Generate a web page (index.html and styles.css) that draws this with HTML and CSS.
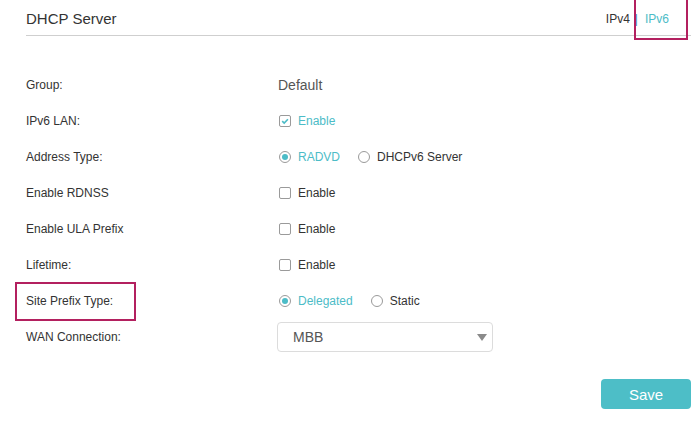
FILE: index.html
```html
<!DOCTYPE html>
<html>
<head>
<meta charset="utf-8">
<link rel="stylesheet" href="styles.css">
</head>
<body>
<div class="page">
  <div class="header">
    <div class="title">DHCP Server</div>
    <div class="tabs">
      <span class="tab">IPv4</span>
      <span class="sep">|</span>
      <span class="tab active mark">IPv6</span>
    </div>
  </div>

  <div class="form">
    <div class="label">Group:</div>
    <div class="value"><span class="plain">Default</span></div>

    <div class="label">IPv6 LAN:</div>
    <div class="value"><span class="opt on"><span class="cb checked"><svg viewBox="0 0 12 12" width="12" height="12"><path d="M3.2 6.2 L5.2 8.1 L8.9 4.2" fill="none" stroke="#4cbcc7" stroke-width="1.6"/></svg></span>Enable</span></div>

    <div class="label">Address Type:</div>
    <div class="value"><span class="opt on"><span class="rd checked"></span>RADVD</span><span class="opt"><span class="rd"></span>DHCPv6 Server</span></div>

    <div class="label">Enable RDNSS</div>
    <div class="value"><span class="opt"><span class="cb"></span>Enable</span></div>

    <div class="label">Enable ULA Prefix</div>
    <div class="value"><span class="opt"><span class="cb"></span>Enable</span></div>

    <div class="label">Lifetime:</div>
    <div class="value"><span class="opt"><span class="cb"></span>Enable</span></div>

    <div class="label"><span class="mark2">Site Prefix Type:</span></div>
    <div class="value"><span class="opt on"><span class="rd checked"></span>Delegated</span><span class="opt"><span class="rd"></span>Static</span></div>

    <div class="label">WAN Connection:</div>
    <div class="value"><div class="select"><span>MBB</span><span class="arrow"></span></div></div>
  </div>

  <div class="actions">
    <button class="save">Save</button>
  </div>
</div>
</body>
</html>
```
FILE: styles.css
```css
* { box-sizing: border-box; }
html, body { margin: 0; padding: 0; background: #fff; }
body { font-family: "Liberation Sans", Arial, sans-serif; color: #333; }

.page { padding: 0 6px 0 26px; width: 697px; }

.header {
  height: 36px;
  border-bottom: 1px solid #cfcfcf;
  display: flex;
  justify-content: space-between;
  align-items: center;
  padding-top: 2px;
}
.title { font-size: 15px; color: #333; }
.tabs { display: flex; align-items: center; font-size: 12px; padding-right: 22px; }
.tab { color: #333; }
.tab.active { color: #4cbcc7; }
.sep { color: #3d8fc6; margin: 0 7px 0 5px; font-size: 12px; }

.mark { position: relative; }
.mark::after {
  content: "";
  position: absolute;
  left: -11px; right: -19px;
  top: -17px; bottom: -14px;
  border: 2px solid #b3205f;
}

.form {
  margin-top: 31px;
  display: grid;
  grid-template-columns: 252px 1fr;
  grid-auto-rows: 36px;
  font-size: 12px;
}
.label { display: flex; align-items: center; color: #333; }
.value { display: flex; align-items: center; }
.plain { font-size: 14px; color: #555; }

.mark2 { position: relative; }
.mark2::after {
  content: "";
  position: absolute;
  left: -11px; right: -23px;
  top: -12px; bottom: -13px;
  border: 2px solid #b3205f;
}

.opt { display: inline-flex; align-items: center; color: #333; margin-right: 17px; }
.opt.on { color: #4cbcc7; }

.cb {
  width: 12px; height: 12px;
  border: 1px solid #9a9a9a;
  border-radius: 2px;
  margin: 0 7px 0 1px;
  display: inline-block;
  position: relative;
}
.cb svg { position: absolute; left: -1px; top: -1px; }

.rd {
  width: 12px; height: 12px;
  border: 1px solid #9a9a9a;
  border-radius: 50%;
  margin: 0 7px 0 1px;
  display: inline-block;
  position: relative;
}
.rd.checked::after {
  content: "";
  position: absolute;
  left: 2px; top: 2px;
  width: 6px; height: 6px;
  border-radius: 50%;
  background: #4cbcc7;
}

.select {
  width: 216px; height: 30px;
  margin-left: -1px;
  border: 1px solid #dcdcdc;
  border-radius: 4px;
  display: flex;
  align-items: center;
  justify-content: space-between;
  padding: 0 5px 0 15px;
  font-size: 14px;
  color: #555;
}
.arrow {
  width: 0; height: 0;
  border-left: 5px solid transparent;
  border-right: 5px solid transparent;
  border-top: 7px solid #8a8a8a;
}

.actions { display: flex; justify-content: flex-end; margin-top: 24px; }
.save {
  width: 90px; height: 30px;
  background: #4dbec7;
  border: none;
  border-radius: 4px;
  color: #fff;
  font-family: "Liberation Sans", Arial, sans-serif;
  font-size: 15px;
  padding: 0;
}
```
